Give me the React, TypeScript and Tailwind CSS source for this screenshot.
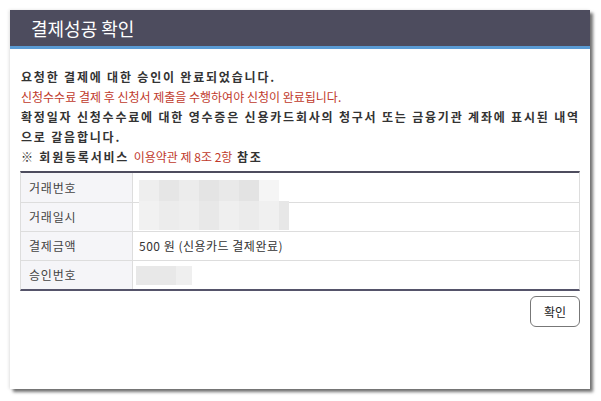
import React from 'react';

const rows = [
  { label: '거래번호', kind: 'blur1' },
  { label: '거래일시', kind: 'blur2' },
  { label: '결제금액', kind: 'text' },
  { label: '승인번호', kind: 'blur3' },
];

const Blur: React.FC<{ kind: string }> = ({ kind }) => {
  if (kind === 'blur1')
    return (
      <div className="flex h-[21px] w-[140px] mt-[5px]">
        <div className="w-[20px] bg-[#eeeeee]" />
        <div className="w-[20px] bg-[#e6e6e6]" />
        <div className="w-[20px] bg-[#ececec]" />
        <div className="w-[20px] bg-[#e4e4e4]" />
        <div className="w-[20px] bg-[#e9e9e9]" />
        <div className="w-[20px] bg-[#e3e3e3]" />
        <div className="w-[20px] bg-[#f5f5f5]" />
      </div>
    );
  if (kind === 'blur2')
    return (
      <div className="flex h-[29px] w-[150px] -mt-[4px]">
        <div className="w-[20px] bg-[#f1f1f1]" />
        <div className="w-[20px] bg-[#ececec]" />
        <div className="w-[20px] bg-[#eeeeee]" />
        <div className="w-[20px] bg-[#e8e8e8]" />
        <div className="w-[20px] bg-[#efefef]" />
        <div className="w-[20px] bg-[#ebebeb]" />
        <div className="w-[20px] bg-[#f0f0f0]" />
        <div className="w-[10px] bg-[#e7e7e7]" />
      </div>
    );
  if (kind === 'blur3')
    return (
      <div className="flex h-[19px] w-[56px] -ml-[3px]">
        <div className="w-[40px] bg-[#e8e8e8]" />
        <div className="w-[16px] bg-[#efefef]" />
      </div>
    );
  return <span className="text-[12px] tracking-[0.5px] text-[#333]">500 원 (신용카드 결제완료)</span>;
};

export default function App() {
  return (
    <div className="w-[601px] h-[401px] bg-white pt-[10px] pl-[10px]" style={{ fontFamily: '"Noto Sans CJK KR", "Noto Sans", sans-serif' }}>
      <div className="w-[580px] h-[379px] bg-white shadow-[3px_3px_3px_rgba(0,0,0,0.55),-1px_0_3px_rgba(0,0,0,0.12)] flex flex-col">
        <div className="h-[36px] bg-[#4d4c5e] flex items-center pl-[21px]">
          <h1 className="text-white text-[18px] leading-none">결제성공 확인</h1>
        </div>
        <div className="h-[3px] bg-[#5a9bd4]" />
        <div className="px-[10px] pt-[18px]">
          <div className="text-[12px] leading-[20px] text-[#333] px-[1px]">
            <p className="font-bold tracking-[1.8px]">요청한 결제에 대한 승인이 완료되었습니다.</p>
            <p className="text-[#c0392b]">신청수수료 결제 후 신청서 제출을 수행하여야 신청이 완료됩니다.</p>
            <p className="font-bold tracking-[1.8px] whitespace-nowrap">
              확정일자 신청수수료에 대한 영수증은 신용카드회사의 청구서 또는 금융기관 계좌에 표시된 내역
              <br />
              으로 갈음합니다.
            </p>
            <p className="font-bold tracking-[1.8px]">
              ※ 회원등록서비스 <span className="font-normal tracking-normal text-[#c0392b]">이용약관 제 8조 2항</span> 참조
            </p>
          </div>
          <div className="mt-[4px] border-t-2 border-t-[#4d4c5e] border-b-2 border-b-[#55546a] border-x border-x-[#dddddd]">
            {rows.map((r, i) => (
              <div key={r.label} className={`flex h-[29px] ${i > 0 ? 'border-t border-[#dddddd]' : ''}`}>
                <div className="w-[112px] bg-[#f5f5f8] border-r border-[#dddddd] flex items-center pl-[8px] text-[12px] tracking-[0.8px] text-[#444]">
                  {r.label}
                </div>
                <div className="flex-1 flex items-center pl-[6px]">
                  <Blur kind={r.kind} />
                </div>
              </div>
            ))}
          </div>
          <div className="flex justify-end mt-[5px]">
            <button className="w-[50px] h-[31px] rounded-[6px] border border-[#777] bg-white text-[12px] text-[#222]">확인</button>
          </div>
        </div>
      </div>
    </div>
  );
}
